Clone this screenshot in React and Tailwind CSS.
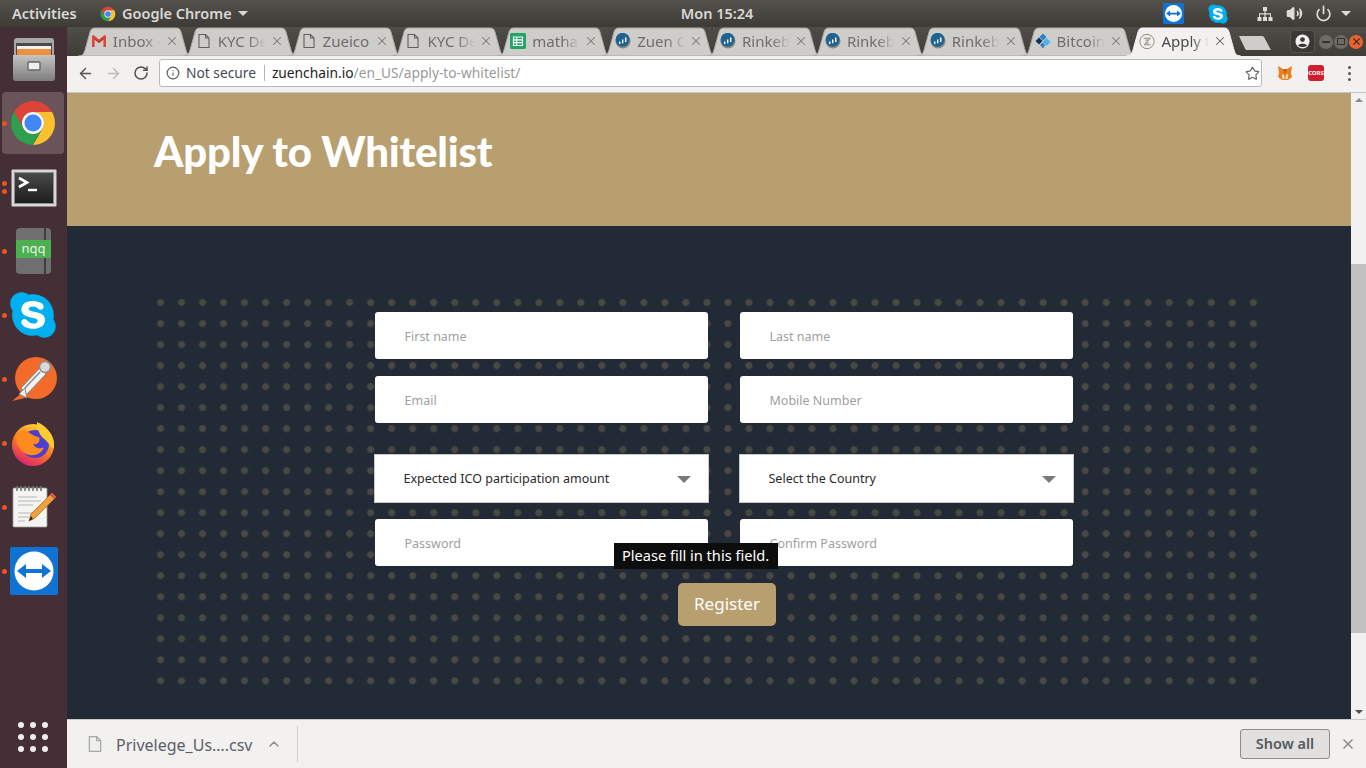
import { ArrowLeft, ArrowRight, RotateCw, Star, Info, X, ChevronUp, Volume2, Power } from 'lucide-react';
import { FaSkype } from 'react-icons/fa';

const uiFont = { fontFamily: '"Noto Sans", sans-serif' };

function ChromeIcon({ size }) {
  return (
    <svg width={size} height={size} viewBox="0 0 48 48">
      <path d="M5 13A22 22 0 0 1 43 13L24 13A11 11 0 0 0 14.5 29.5Z" fill="#db4437" />
      <path d="M43 13A22 22 0 0 1 24 46L33.5 29.5A11 11 0 0 0 24 13Z" fill="#fbc02d" />
      <path d="M24 46A22 22 0 0 1 5 13L14.5 29.5A11 11 0 0 0 33.5 29.5Z" fill="#2e9e4f" />
      <circle cx="24" cy="24" r="11" fill="#f5f5f5" />
      <circle cx="24" cy="24" r="8.5" fill="#4285f4" />
    </svg>
  );
}

function TeamViewerIcon({ size, radius }) {
  return (
    <svg width={size} height={size} viewBox="0 0 48 48">
      <rect width="48" height="48" rx={radius} fill="#0f73d6" />
      <circle cx="24" cy="24" r="19.5" fill="#fff" />
      <path d="M7 24L16 17V22H32V17L41 24L32 31V26H16V31Z" fill="#0f73d6" />
    </svg>
  );
}

function SkypeIcon({ size }) {
  return (
    <span className="relative flex items-center justify-center" style={{ width: size, height: size }}>
      <span className="absolute inset-[18%] bg-white rounded-full" />
      <FaSkype size={size} className="relative text-[#00aff0]" />
    </span>
  );
}

function GmailIcon() {
  return (
    <svg width="16" height="16" viewBox="0 0 16 16">
      <path d="M1 3V14H3.6V6.6L8 10L12.4 6.6V14H15V3L13.6 2L8 6.4L2.4 2Z" fill="#d9463b" />
      <path d="M3.6 6.6L8 10L12.4 6.6V5L8 8.2L3.6 5Z" fill="#b23a30" />
    </svg>
  );
}

function DocIcon({ color = '#62605c', fill = 'none', size = 16 }) {
  return (
    <svg width={size} height={size} viewBox="0 0 16 16">
      <path d="M3 1.5H9.5L13 5V14.5H3Z M9.5 1.5V5H13" fill={fill} stroke={color} strokeWidth="1.1" />
    </svg>
  );
}

function SheetsIcon() {
  return (
    <svg width="16" height="16" viewBox="0 0 16 16">
      <rect width="16" height="16" rx="1.5" fill="#23a566" />
      <path d="M3.5 4H12.5V12.5H3.5Z M3.5 6.8H12.5 M3.5 9.6H12.5 M6.6 4V12.5" fill="none" stroke="#fff" strokeWidth="1.2" />
    </svg>
  );
}

function RinkebyIcon() {
  return (
    <svg width="16" height="16" viewBox="0 0 16 16">
      <circle cx="8" cy="8" r="7.5" fill="#8a8a88" />
      <circle cx="7.6" cy="6.8" r="7" fill="#1f6391" />
      <path d="M4 8.5H5.4V11H4Z M7 6.5H8.4V10.2H7Z M10 4.5H11.4V9H10Z" fill="#fff" />
    </svg>
  );
}

function BitcoinIcon() {
  return (
    <svg width="16" height="16" viewBox="0 0 16 16">
      <path d="M8 0.5L11.5 4L8 7.5L4.5 4Z" fill="#2f7fc8" />
      <path d="M4 4.5L7.5 8L4 11.5L0.5 8Z" fill="#12315c" />
      <path d="M11.5 5L15.5 9L11.5 13L7.8 9Z" fill="#49b3ee" />
      <path d="M7.5 9.5L10 12L8 15.5L5 12Z" fill="#2f7fc8" />
    </svg>
  );
}

function ZuenIcon() {
  return (
    <svg width="17" height="17" viewBox="0 0 17 17">
      <circle cx="8.5" cy="8.5" r="7.6" fill="none" stroke="#8d8470" strokeWidth="1" />
      <path d="M5 5H12L5.5 12H12.5 M6.5 7H10.5 M6.5 10H10.5" fill="none" stroke="#8d8470" strokeWidth="1" />
    </svg>
  );
}

function Tab({ icon, title, active, noFade }) {
  return (
    <div className={`relative w-[115px] h-[29px] -ml-[10.15px] shrink-0 ${active ? 'z-10' : ''}`}>
      <svg className="absolute inset-0" width="115" height="29" viewBox="0 0 115 29">
        <path
          d="M0.5 29C5 29 6 26 7 23L12 5C13 2 14 1 17 1H98C101 1 102 2 103 5L108 23C109 26 110 29 114.5 29Z"
          fill={active ? '#f2f1f0' : '#cfcdca'}
          stroke={active ? '#f2f1f0' : '#a8a6a3'}
          strokeWidth="1"
        />
      </svg>
      <div className="relative flex items-center h-full pl-[13px] pb-[1px]">
        <span className="w-4 h-4 shrink-0 flex items-center justify-center">{icon}</span>
        <span className={`ml-[6px] w-[49px] whitespace-nowrap text-[15px] ${noFade ? '' : '[mask-image:linear-gradient(to_right,black_62%,transparent_98%)]'} ${active ? 'text-[#4a4a4a]' : 'text-[#6f6d6b]'}`}>
          {title}
        </span>
        <X size={14} strokeWidth={1.8} className={`ml-[3px] ${active ? 'text-[#666]' : 'text-[#7b7977]'}`} />
      </div>
    </div>
  );
}

function DockSlot({ dots = 0, active, children }) {
  return (
    <div className="relative w-full h-16 flex items-center justify-center shrink-0">
      {active && <div className="absolute left-[2px] top-[1px] w-[62px] h-[62px] rounded bg-[#6a5459]" />}
      {dots > 0 && (
        <div className="absolute left-[2px] inset-y-0 flex flex-col justify-center gap-[3px]">
          {Array.from({ length: dots }).map((_, i) => (
            <span key={i} className="w-[5px] h-[5px] rounded-full bg-[#e95420]" />
          ))}
        </div>
      )}
      <div className="relative flex items-center justify-center">{children}</div>
    </div>
  );
}

function Dock() {
  return (
    <aside className="w-[67px] shrink-0 flex flex-col bg-[#432f35]">
      <DockSlot>
        <svg width="42" height="45" viewBox="0 0 42 45">
          <defs>
            <linearGradient id="cab" x1="0" y1="0" x2="0" y2="1">
              <stop offset="0" stopColor="#c4c4c2" />
              <stop offset="1" stopColor="#7d7d7f" />
            </linearGradient>
          </defs>
          <rect x="1" y="1" width="40" height="42" rx="3" fill="#a8a8a6" />
          <rect x="3" y="6" width="36" height="12" fill="#4a4a4a" />
          <rect x="4" y="9" width="34" height="3" fill="#f0f0ee" />
          <rect x="4" y="12" width="34" height="6" fill="#ee8f3c" />
          <path d="M0 18H42V41C42 43 41 44 39 44H3C1 44 0 43 0 41Z" fill="url(#cab)" />
          <rect x="15" y="25" width="12" height="8" rx="1" fill="#eee" stroke="#666" strokeWidth="1.4" />
        </svg>
      </DockSlot>
      <DockSlot active dots={1}>
        <span className="-ml-[2px]"><ChromeIcon size={48} /></span>
      </DockSlot>
      <DockSlot dots={2}>
        <span className="mt-[2px]">
          <svg width="46" height="38" viewBox="0 0 46 38">
            <defs>
              <linearGradient id="term" x1="0" y1="0" x2="0" y2="1">
                <stop offset="0" stopColor="#4a4a4a" />
                <stop offset="1" stopColor="#1d1d1d" />
              </linearGradient>
            </defs>
            <rect x="0.5" y="0.5" width="45" height="37" rx="1" fill="#d8d8d8" />
            <rect x="3" y="3" width="40" height="32" fill="#8d8d8d" />
            <rect x="4" y="4" width="38" height="30" fill="url(#term)" />
            <path d="M8 9L16 13.5L8 18" fill="none" stroke="#fff" strokeWidth="2.6" />
            <path d="M17 21H26" stroke="#fff" strokeWidth="2.4" />
          </svg>
        </span>
      </DockSlot>
      <DockSlot dots={1}>
        <div className="relative w-[35px] h-[46px] rounded bg-[#6f6f6f] overflow-hidden">
          <div className="absolute right-[5px] inset-y-0 w-[2px] bg-[#3f3f3f]" />
          <div className="absolute left-0 right-0 top-[12px] h-[18px] bg-[#4cb050] text-center text-[13px] leading-[17px] text-[#e8f5e8]">nqq</div>
        </div>
      </DockSlot>
      <DockSlot dots={1}>
        <span className="-ml-[2px]"><SkypeIcon size={52} /></span>
      </DockSlot>
      <DockSlot dots={1}>
        <svg width="46" height="46" viewBox="0 0 46 46">
          <circle cx="25" cy="22" r="21" fill="#f26b2a" />
          <path d="M1 45L12 36L14 42Z" fill="#f26b2a" />
          <path d="M10 32L29 12L35 18L16 38Z" fill="#f3f3f3" stroke="#8a8a8a" strokeWidth="1" />
          <path d="M14 32L29 16" stroke="#8a8a8a" strokeWidth="1.5" />
          <circle cx="34" cy="11" r="5.5" fill="#d9d9d9" stroke="#8a8a8a" strokeWidth="1.4" />
          <path d="M8 38L14 32L16 42Z" fill="#ececec" stroke="#8a8a8a" strokeWidth="1" />
        </svg>
      </DockSlot>
      <DockSlot dots={1}>
        <span className="-ml-[1px]">
          <svg width="44" height="46" viewBox="0 0 44 46">
            <defs>
              <linearGradient id="ffx" x1="0.7" y1="0" x2="0.2" y2="1">
                <stop offset="0" stopColor="#ffd43b" />
                <stop offset="0.5" stopColor="#ff7a1f" />
                <stop offset="1" stopColor="#d6197a" />
              </linearGradient>
            </defs>
            <circle cx="22" cy="25" r="21" fill="url(#ffx)" />
            <circle cx="24" cy="24" r="14" fill="#4b3fd0" />
            <path d="M26 2C36 6 44 16 43 27C42 32 38 22 32 18C28 14 26 8 26 2Z" fill="#ffcb2e" />
            <path d="M6 13C10 10 14 10 17 12C21 14 24 17 28 17C30 22 26 25 22 24C24 28 29 30 33 27C30 36 18 38 11 31C6 26 4 19 6 13Z" fill="#ff8a1f" />
          </svg>
        </span>
      </DockSlot>
      <DockSlot dots={1}>
        <svg width="46" height="44" viewBox="0 0 46 44">
          <rect x="2" y="3" width="34" height="39" rx="1" fill="#f4f4f2" stroke="#9a9a96" strokeWidth="0.8" />
          <path d="M6 1V6M10 1V6M14 1V6M18 1V6M22 1V6M26 1V6M30 1V6" stroke="#77746f" strokeWidth="1.6" />
          <path d="M7 12H26M7 16H30M7 20H22M7 28H26M7 32H18M7 36H14" stroke="#b5b5b2" strokeWidth="1" />
          <path d="M41 8L45 12L24 33L18 36L20 29Z" fill="#f0a03c" stroke="#b46f1c" strokeWidth="0.8" />
          <path d="M41 8L45 12L43 14L39 10Z" fill="#d9534f" />
          <path d="M18 36L20 31L22 34Z" fill="#222" />
        </svg>
      </DockSlot>
      <DockSlot dots={1}>
        <TeamViewerIcon size={48} radius={2} />
      </DockSlot>
      <div className="mt-auto mb-[16px] ml-[18px] grid grid-cols-3 gap-[6px] w-[30px]">
        {Array.from({ length: 9 }).map((_, i) => (
          <span key={i} className="w-[6px] h-[6px] rounded-full bg-[#eeeeec]" />
        ))}
      </div>
    </aside>
  );
}

function TopBar() {
  return (
    <header className="h-[27px] shrink-0 flex items-center bg-gradient-to-b from-[#55524c] to-[#3d3b36] text-[14.5px] font-semibold text-[#d9d9d6]">
      <span className="ml-[12px] w-[88px]">Activities</span>
      <ChromeIcon size={16} />
      <span className="ml-[6px]">Google Chrome</span>
      <span className="ml-[6px] w-0 h-0 border-x-[5px] border-x-transparent border-t-[5px] border-t-[#d9d9d6]" />
      <span className="ml-[433px] w-[71px] text-center whitespace-nowrap">Mon 15:24</span>
      <div className="ml-auto flex items-center">
        <TeamViewerIcon size={21} radius={3} />
        <span className="ml-[23px]"><SkypeIcon size={22} /></span>
        <svg className="ml-[28px]" width="16" height="16" viewBox="0 0 16 16">
          <path d="M6 1H10V5H8.6V7.2H14V11H15.5V15H11.5V11H13V8.4H8.6V11H10V15H6V11H7.4V8.4H3V11H4.5V15H0.5V11H2V7.2H7.4V5H6Z" fill="#dcdcd9" />
        </svg>
        <Volume2 className="ml-[13px] text-[#dcdcd9] fill-[#dcdcd9]" size={17} strokeWidth={2} />
        <Power className="ml-[12px] text-[#dcdcd9]" size={17} strokeWidth={2.4} />
        <span className="ml-[9px] mr-[15px] w-0 h-0 border-x-[5px] border-x-transparent border-t-[5px] border-t-[#dcdcd9]" />
      </div>
    </header>
  );
}

const tabs = [
  { icon: <GmailIcon />, title: 'Inbox -' },
  { icon: <DocIcon />, title: 'KYC De' },
  { icon: <DocIcon />, title: 'Zueico', noFade: true },
  { icon: <DocIcon />, title: 'KYC De' },
  { icon: <SheetsIcon />, title: 'matha' },
  { icon: <RinkebyIcon />, title: 'Zuen C' },
  { icon: <RinkebyIcon />, title: 'Rinkeb' },
  { icon: <RinkebyIcon />, title: 'Rinkeb' },
  { icon: <RinkebyIcon />, title: 'Rinkeb' },
  { icon: <BitcoinIcon />, title: 'Bitcoin' },
  { icon: <ZuenIcon />, title: 'Apply t', active: true },
];

function TabStrip() {
  return (
    <div className="h-[29px] shrink-0 flex items-center pl-[21px] bg-gradient-to-b from-[#4f4d47] to-[#3f3d38]">
      {tabs.map((t, i) => (
        <Tab key={i} icon={t.icon} title={t.title} active={t.active} noFade={t.noFade} />
      ))}
      <svg className="-ml-[3px] mt-[3px]" width="34" height="16" viewBox="0 0 34 16">
        <path d="M1 1H24C25 1 26 1.5 26.5 3L33 15H9C8 15 7.5 14.5 7 13.5Z" fill="#cfcdca" />
      </svg>
      <div className="ml-[18px] w-[25px] h-[23px] rounded bg-[#3a3936] border border-[#55534e] flex items-center justify-center">
        <svg width="15" height="15" viewBox="0 0 15 15">
          <circle cx="7.5" cy="7.5" r="7" fill="#f2f1f0" />
          <circle cx="7.5" cy="5.6" r="2.4" fill="#3a3936" />
          <path d="M3 11.5C4 9 11 9 12 11.5C10 13.5 5 13.5 3 11.5Z" fill="#3a3936" />
        </svg>
      </div>
      <div className="ml-[4px] flex items-center gap-[1px]">
        <span className="w-[14px] h-[14px] rounded-full bg-[#6d6b66] flex items-center justify-center"><span className="w-[8px] h-[2px] bg-[#33322f]" /></span>
        <span className="w-[14px] h-[14px] rounded-full bg-[#6d6b66] flex items-center justify-center"><span className="w-[8px] h-[7px] border border-[#33322f]" /></span>
        <span className="w-[14px] h-[14px] rounded-full bg-[#e9632e] flex items-center justify-center"><X size={11} strokeWidth={2.5} className="text-[#4a2a1a]" /></span>
      </div>
    </div>
  );
}

function Toolbar() {
  return (
    <div className="h-[37px] shrink-0 flex items-center bg-[#f2f1f0] border-b border-[#c4c4c2] pb-[2px]">
      <ArrowLeft className="ml-[10px] text-[#55534f]" size={17} strokeWidth={2} />
      <ArrowRight className="ml-[11px] text-[#bdbcba]" size={17} strokeWidth={2} />
      <RotateCw className="ml-[11px] text-[#4f4d49]" size={16} strokeWidth={2.2} />
      <div className="ml-[10px] w-[1103px] h-[28px] bg-white border border-[#b9b9b7] rounded-[3px] flex items-center text-[13.75px] text-[#9a9a9a]">
        <Info className="ml-[6px] text-[#5b5b5b]" size={14} strokeWidth={2} />
        <span className="ml-[6px] text-[#444a52] whitespace-nowrap">Not secure</span>
        <span className="ml-[8px] w-px h-[16px] bg-[#b5b5b5]" />
        <span className="ml-[7px] whitespace-nowrap"><span className="text-[#222]">zuenchain.io</span>/en_US/apply-to-whitelist/</span>
        <Star className="ml-auto mr-[1px] text-[#5f5f5f]" size={15} strokeWidth={1.8} />
      </div>
      <svg className="ml-[15px]" width="16" height="16" viewBox="0 0 16 16">
        <path d="M1 1L6 4H10L15 1L14 8L15 12L11 15H5L1 12L2 8Z" fill="#e8821e" />
        <path d="M5 9L7 10L7.5 14H5.5Z M11 9L9 10L8.5 14H10.5Z" fill="#f3e3d0" />
        <path d="M6 4H10L9 8H7Z" fill="#c4661a" />
      </svg>
      <span className="ml-[15px] w-[16px] h-[16px] rounded-[3px] bg-[#cf1f2e] text-white text-[6px] font-bold flex items-center justify-center">CORS</span>
      <span className="ml-[24px] flex flex-col gap-[3px]">
        <span className="w-[3px] h-[3px] rounded-full bg-[#555]" />
        <span className="w-[3px] h-[3px] rounded-full bg-[#555]" />
        <span className="w-[3px] h-[3px] rounded-full bg-[#555]" />
      </span>
    </div>
  );
}

function Field({ placeholder }) {
  return (
    <input
      placeholder={placeholder}
      className="w-[333px] h-[47px] bg-white rounded-[3px] pl-[30px] pr-3 pt-[2px] text-[12.5px] outline-none placeholder:text-[#a0a0a0]"
    />
  );
}

function SelectBox({ label }) {
  return (
    <div className="w-[335px] h-[49px] -mx-px bg-white border border-[#c9c9c9] flex items-center justify-between pl-[29px] pr-[17px] pt-[2px] text-[12.5px] text-[#2a2a2a]">
      <span>{label}</span>
      <span className="w-0 h-0 border-x-[7px] border-x-transparent border-t-[7px] border-t-[#7a7a7a]" />
    </div>
  );
}

function RegisterForm() {
  return (
    <div className="ml-[83px] mt-[66px] w-[1110px] h-[400px] bg-[radial-gradient(circle,#484944_3.2px,transparent_3.8px)] bg-[size:21.03px_21.03px] flex flex-col items-center">
      <form className="ml-[37px] mt-[20px] relative grid grid-cols-[333px_333px] gap-x-[32px]">
        <Field placeholder="First name" />
        <Field placeholder="Last name" />
        <div className="col-span-2 h-[17px]" />
        <Field placeholder="Email" />
        <Field placeholder="Mobile Number" />
        <div className="col-span-2 h-[31px]" />
        <SelectBox label="Expected ICO participation amount" />
        <SelectBox label="Select the Country" />
        <div className="col-span-2 h-[16px]" />
        <Field placeholder="Password" />
        <Field placeholder="Confirm Password" />
        <div className="col-span-2 h-[17px]" />
        <div className="col-span-2 flex justify-center pl-[6px]">
          <button type="button" className="w-[98px] h-[43px] rounded-[5px] bg-[#b89f6f] text-white text-[17px] pl-[1px] pb-[2px]">Register</button>
        </div>
        <div className="absolute left-[239px] top-[231px] h-[26px] w-[164px] bg-[#0d0d0d] text-white text-[14.6px] flex items-center justify-center whitespace-nowrap">
          Please fill in this field.
        </div>
      </form>
    </div>
  );
}

function Scrollbar() {
  return (
    <div className="w-[15px] shrink-0 bg-[#f1f1f1] flex flex-col items-center">
      <div className="h-[13px] flex items-center justify-center">
        <span className="w-0 h-0 border-x-[4px] border-x-transparent border-b-[4px] border-b-[#8a8a8a]" />
      </div>
      <div className="h-[158px]" />
      <div className="w-full h-[369px] bg-[#c1c1c1]" />
      <div className="flex-1" />
      <div className="h-[15px] flex items-center justify-center">
        <span className="w-0 h-0 border-x-[4px] border-x-transparent border-t-[4px] border-t-[#505050]" />
      </div>
    </div>
  );
}

function DownloadBar() {
  return (
    <div className="h-[49px] shrink-0 flex items-center bg-[#f2f1f0] border-t border-[#c9c9c7] text-[#5a6068]">
      <span className="ml-[19px]"><DocIcon size={18} color="#a8a8a6" fill="#efefee" /></span>
      <span className="ml-[12px] pt-[2px] text-[16px] whitespace-nowrap">Privelege_Us….csv</span>
      <ChevronUp className="ml-[14px] text-[#8f8f8d]" size={16} strokeWidth={2.2} />
      <span className="ml-[15px] w-px h-[36px] bg-[#cfcfcd]" />
      <button type="button" className="ml-auto w-[90px] h-[30px] rounded-[3px] border border-[#8c8c8a] bg-[#e1e0de] text-[14.5px] font-semibold text-[#55595f]">Show all</button>
      <X className="ml-[10px] mr-[10px] text-[#8a8a88]" size={16} strokeWidth={2.4} />
    </div>
  );
}

export default function App() {
  return (
    <div className="w-[1366px] h-[768px] overflow-hidden flex flex-col" style={uiFont}>
      <TopBar />
      <div className="flex-1 min-h-0 flex">
        <Dock />
        <div className="flex-1 min-w-0 flex flex-col">
          <TabStrip />
          <Toolbar />
          <div className="flex-1 min-h-0 flex">
            <main className="flex-1 min-w-0 bg-[#222a36] flex flex-col">
              <div className="h-[133px] shrink-0 bg-[#b89f6f] flex items-center pl-[87px] pb-[16px]">
                <h1 className="text-[42px] font-black tracking-[-0.2px] text-white" style={{ fontFamily: 'Lato, sans-serif' }}>Apply to Whitelist</h1>
              </div>
              <RegisterForm />
            </main>
            <Scrollbar />
          </div>
          <DownloadBar />
        </div>
      </div>
    </div>
  );
}
